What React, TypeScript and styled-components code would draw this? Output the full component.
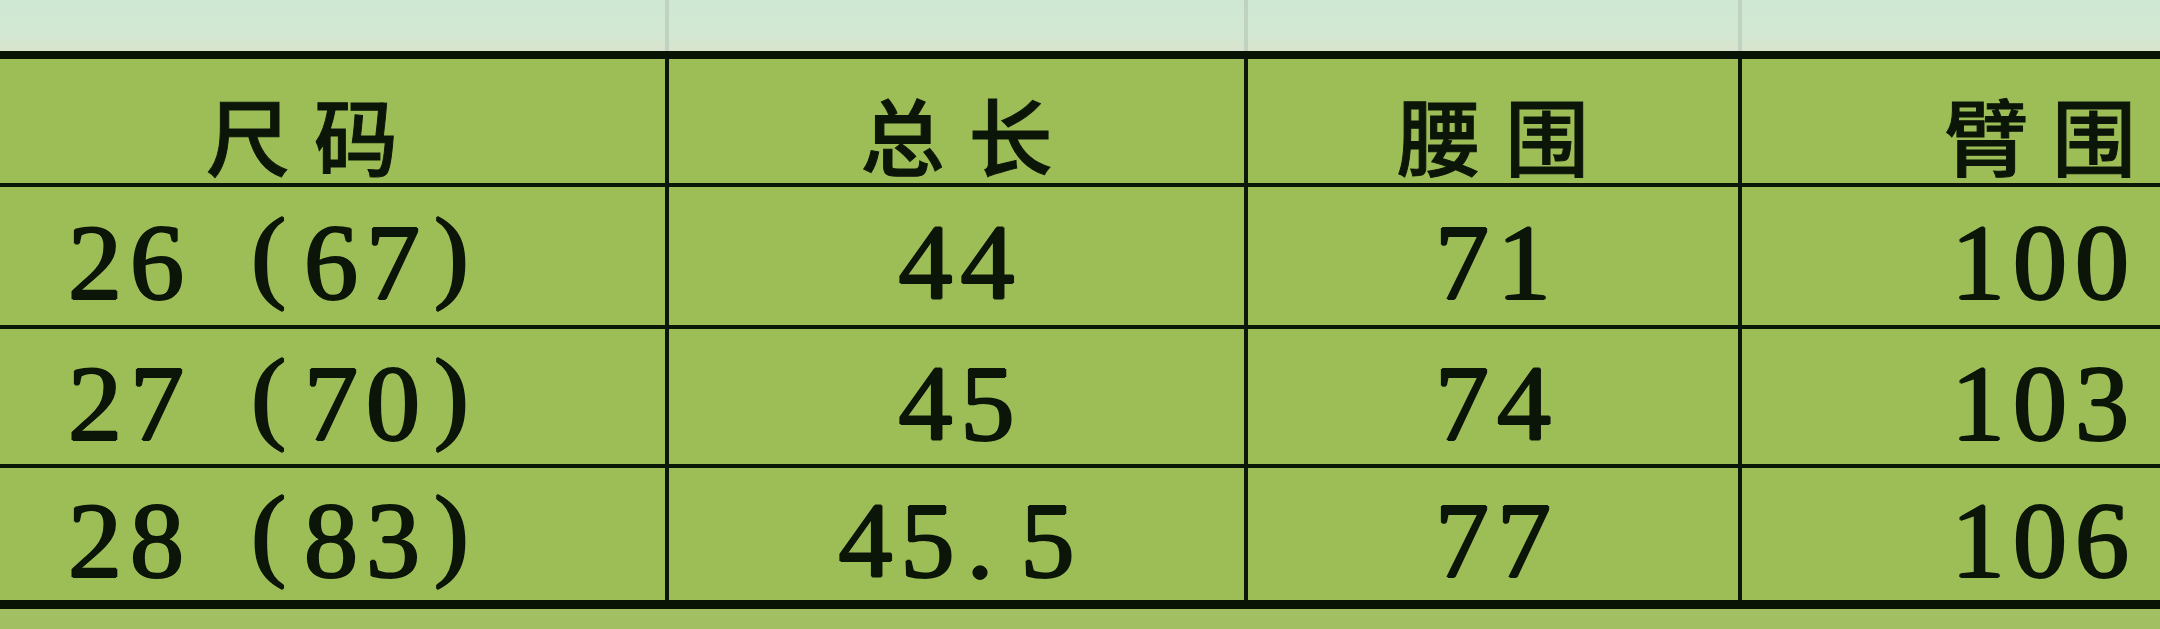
import React from "react";
import styled, { createGlobalStyle } from "styled-components";

const Global = createGlobalStyle`
  html, body { margin: 0; padding: 0; background: #a2bf62; }
  body { width: 2160px; height: 629px; overflow: hidden; }
`;

const COLS = "665px 575px 490px 1fr";
const INK = "#0c1608";

const Page = styled.div`
  width: 2160px;
  height: 629px;
  display: flex;
  flex-direction: column;
  background: #a2bf62;
`;

const Ghost = styled.div`
  height: 51px;
  display: grid;
  grid-template-columns: ${COLS};
  column-gap: 4px;
  background: #bfd3c0;
`;

const GhostCell = styled.div`
  background: linear-gradient(180deg, #cfe8d3 0%, #d2e7d2 70%, #d9e3cc 100%);
`;

const Table = styled.div`
  display: grid;
  grid-template-columns: ${COLS};
  grid-template-rows: 124px 138px 135px 132px;
  column-gap: 4px;
  row-gap: 4px;
  background: #0b1707;
  border-top: 8px solid #081205;
  border-bottom: 9px solid #081205;
`;

const Cell = styled.div<{ $align?: "left" | "center"; $padL?: number; $padR?: number; $padT?: number }>`
  background: #9dbe57;
  display: flex;
  align-items: center;
  justify-content: ${(p) => (p.$align === "left" ? "flex-start" : "center")};
  padding-left: ${(p) => p.$padL ?? 0}px;
  padding-right: ${(p) => p.$padR ?? 0}px;
  padding-top: ${(p) => p.$padT ?? 0}px;
  box-sizing: border-box;
  color: ${INK};
  white-space: nowrap;
`;

const HeadText = styled.span`
  font-family: "Noto Sans CJK SC", sans-serif;
  font-size: 84px;
  font-weight: 500;
  letter-spacing: 24px;
  margin-right: -24px;
  line-height: 1;
  -webkit-text-stroke: 1px ${INK};
`;

const NumText = styled.span`
  font-family: "Liberation Serif", serif;
  font-size: 108px;
  font-weight: 400;
  letter-spacing: 8px;
  margin-right: -8px;
  line-height: 1;
  display: inline-flex;
  align-items: baseline;
  text-shadow: 1.3px 0 0 ${INK}, -1.3px 0 0 ${INK}, 0 0.8px 0 ${INK}, 0 -0.8px 0 ${INK};
`;

const ParenBox = styled.span<{ $side: "open" | "close" }>`
  display: inline-block;
  width: ${(p) => (p.$side === "open" ? 112 : 60)}px;
  text-align: ${(p) => (p.$side === "open" ? "right" : "left")};
  padding-right: ${(p) => (p.$side === "open" ? 18 : 0)}px;
  padding-left: ${(p) => (p.$side === "close" ? 6 : 0)}px;
  box-sizing: border-box;
  font-family: "Liberation Serif", serif;
  font-size: 104px;
  font-weight: 400;
  letter-spacing: 0;
  position: relative;
  top: -10px;
`;

const DotBox = styled.span`
  display: inline-block;
  width: 58px;
  padding-left: 4px;
  box-sizing: border-box;
  letter-spacing: 0;
`;

const Strip = styled.div`
  flex: 1;
  background: #a2bf62;
`;

const headers = ["尺码", "总长", "腰围", "臂围"];
const rows: [string, string, string, string, string][] = [
  ["26", "67", "44", "71", "100"],
  ["27", "70", "45", "74", "103"],
  ["28", "83", "45.5", "77", "106"],
];

function Num({ v }: { v: string }) {
  const parts = v.split(".");
  if (parts.length === 1) return <NumText>{v}</NumText>;
  return (
    <NumText>
      {parts[0]}
      <DotBox>.</DotBox>
      {parts[1]}
    </NumText>
  );
}

export default function App() {
  return (
    <Page>
      <Global />
      <Ghost>
        <GhostCell />
        <GhostCell />
        <GhostCell />
        <GhostCell />
      </Ghost>
      <Table>
        {headers.map((h, i) => (
          <Cell
            key={h}
            $padR={i === 0 ? 61 : 0}
            $padL={i === 3 ? 178 : 0}
            $padT={26}
          >
            <HeadText>{h}</HeadText>
          </Cell>
        ))}
        {rows.map((r) => (
          <React.Fragment key={r[0]}>
            <Cell $align="left" $padL={68} $padT={14}>
              <NumText>
                {r[0]}
                <ParenBox $side="open">(</ParenBox>
                {r[1]}
                <ParenBox $side="close">)</ParenBox>
              </NumText>
            </Cell>
            <Cell $padT={14}>
              <Num v={r[2]} />
            </Cell>
            <Cell $padT={14}>
              <Num v={r[3]} />
            </Cell>
            <Cell $padL={178} $padT={14}>
              <Num v={r[4]} />
            </Cell>
          </React.Fragment>
        ))}
      </Table>
      <Strip />
    </Page>
  );
}
